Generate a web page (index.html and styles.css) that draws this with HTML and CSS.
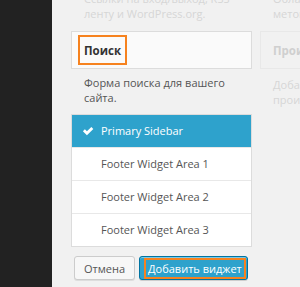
FILE: index.html
```html
<!DOCTYPE html>
<html lang="ru">
<head>
  <meta charset="UTF-8" />
  <title>Виджеты</title>
  <link rel="stylesheet" href="styles.css">
</head>
<body>
  <div class="page">
    <div class="adminmenu"></div>

    <div class="content">
      <div class="col-main">
        <p class="faded-desc">Ссылки на вход/выход, RSS<br>ленту и WordPress.org.</p>

        <div class="widget">
          <h3 class="widget-title"><span class="highlight">Поиск</span></h3>
        </div>
        <p class="desc">Форма поиска для вашего сайта.</p>

        <ul class="chooser">
          <li class="selected">
            <svg class="check" viewBox="0 0 20 20" width="12" height="12">
              <path d="M1.5 10.5 L4.8 7.2 L8.2 10.6 L15.6 3.2 L18.9 6.5 L8.2 17.2 Z" fill="#fff"/>
            </svg>
            Primary Sidebar
          </li>
          <li>Footer Widget Area 1</li>
          <li>Footer Widget Area 2</li>
          <li>Footer Widget Area 3</li>
        </ul>

        <div class="actions">
          <button type="button" class="btn">Отмена</button>
          <button type="button" class="btn btn-primary"><span class="highlight">Добавить виджет</span></button>
        </div>
      </div>

      <div class="col-side">
        <p class="faded-desc">Облако ваших наиболее<br>меток в виде облака.</p>
        <div class="widget faded">
          <h3 class="widget-title">Произвольное меню</h3>
        </div>
        <p class="faded-desc">Добавьте меню в боковую<br>произвольную колонку.</p>
      </div>
    </div>
  </div>
</body>
</html>
```

FILE: styles.css
```css
body {
  margin: 0;
  font-family: "Open Sans", sans-serif;
  font-size: 11px;
  background-color: #f1f1f1;
  color: #555;
}

.page {
  display: flex;
  height: 287px;
  overflow: hidden;
}

.adminmenu {
  width: 52px;
  flex-shrink: 0;
  background-color: #222;
}

.content {
  display: flex;
  padding-left: 19px;
  gap: 8px;
}

.col-main {
  width: 181px;
  flex-shrink: 0;
}

.col-side {
  width: 60px;
  white-space: nowrap;
}

.faded-desc {
  margin: -9px 0 0;
  padding-left: 13px;
  line-height: 15px;
  color: #d6d6d6;
}

.col-side .faded-desc:last-child {
  margin-top: 8px;
}

.widget {
  margin-top: 10px;
  height: 36px;
  border: 1px solid #dcdcdc;
  background-color: #fafafa;
  display: flex;
  align-items: center;
}

.widget.faded {
  border-color: #e8e8e8;
  background-color: #f1f1f1;
}

.widget-title {
  margin: 0;
  padding-left: 8px;
  font-size: 11.5px;
  font-weight: bold;
  color: #333;
}

.widget.faded .widget-title {
  padding-left: 12px;
  color: #cfcfcf;
}

.highlight {
  display: inline-block;
  outline: 2px solid #f6821f;
  padding: 6px 4px 5px;
}

.desc {
  margin: 6px 0 0;
  padding: 0 13px;
  line-height: 15px;
}

.chooser {
  list-style: none;
  margin: 9px 0 0;
  padding: 0;
  background-color: #fff;
  border: 1px solid #dcdcdc;
}

.chooser li {
  height: 32px;
  line-height: 32px;
  padding-left: 29px;
  border-top: 1px solid #e8e8e8;
  position: relative;
}

.chooser li:first-child {
  border-top: none;
}

.chooser li.selected {
  background-color: #2ea2cc;
  color: #fff;
}

.check {
  position: absolute;
  left: 10px;
  top: 10px;
}

.actions {
  display: flex;
  gap: 4px;
  margin-top: 9px;
  padding-left: 3px;
}

.btn {
  height: 24px;
  padding: 0 9px;
  font-family: "Open Sans", sans-serif;
  font-size: 11px;
  color: #555;
  background-color: #f7f7f7;
  border: 1px solid #ccc;
  border-radius: 3px;
  box-shadow: 0 1px 0 #ddd;
}

.btn-primary {
  padding: 0 3px 0 6px;
  color: #fff;
  background-color: #2ea2cc;
  border-color: #0074a2;
  box-shadow: inset 0 1px 0 #78c8e6, 0 1px 0 rgba(0,0,0,0.15);
}

.btn-primary .highlight {
  padding: 1px 2px;
}
```
